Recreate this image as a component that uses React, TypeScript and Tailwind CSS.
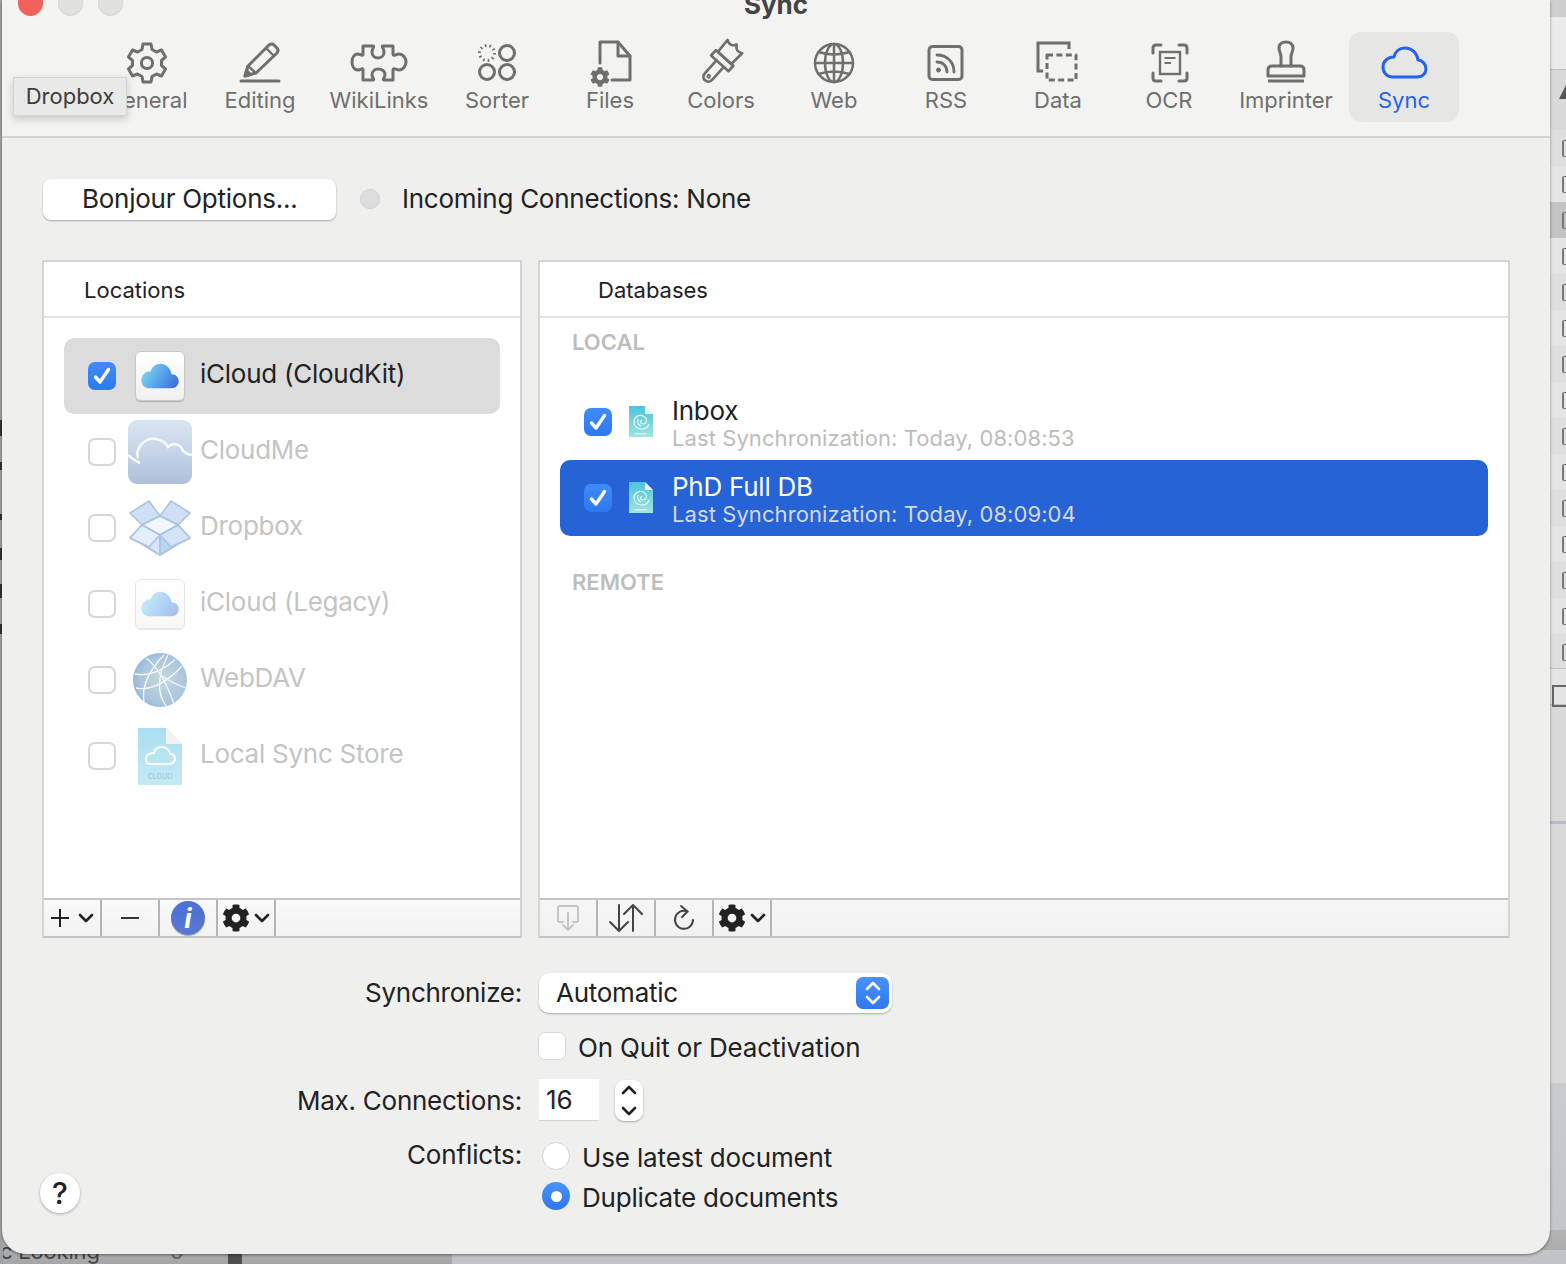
import { FaCog } from "react-icons/fa";
import type { ReactNode } from "react";

const Check = ({ disabled }: { disabled?: boolean }) => (
  <span className={`flex h-[28px] w-[28px] shrink-0 items-center justify-center rounded-[7px] bg-gradient-to-b from-[#3f8cf8] to-[#2f78f0] ${disabled ? "opacity-50" : ""}`}>
    <svg width="20" height="20" viewBox="0 0 20 20" fill="none" stroke="#fff" strokeWidth="3.4" strokeLinecap="round" strokeLinejoin="round">
      <path d="M3.5 11 L8 16 L16.5 3.5" />
    </svg>
  </span>
);

const Unchecked = () => (
  <span className="block h-[28px] w-[28px] shrink-0 rounded-[7px] border-2 border-[#d6d6d6] bg-white" />
);

const ToolIcon = ({ children, blue }: { children: ReactNode; blue?: boolean }) => (
  <svg width="60" height="60" viewBox="0 0 60 60" fill="none" stroke={blue ? "#2563eb" : "#6f6f6d"} strokeWidth="3" strokeLinejoin="round" strokeLinecap="round">
    {children}
  </svg>
);

const tools = [
  {
    label: "General",
    pos: "left-[92px]",
    icon: (
      <>
        <path d="M26 12 H34 L35 17.5 L39.5 20 L44.5 18 L48.5 25 L44.5 28.5 V33.5 L48.5 37 L44.5 44 L39.5 42 L35 44.5 L34 50 H26 L25 44.5 L20.5 42 L15.5 44 L11.5 37 L15.5 33.5 V28.5 L11.5 25 L15.5 18 L20.5 20 L25 17.5 Z" />
        <circle cx="30" cy="31" r="5.6" />
      </>
    ),
  },
  {
    label: "Editing",
    pos: "left-[205px]",
    icon: (
      <>
        <path d="M11 49 H49" />
        <path d="M15 44 L18 34 L39 13 Q42 11 44 13 L47 16 Q49 18 47 21 L26 41 Z" />
        <path d="M36 16 L44 24 M18 34 L26 41" strokeWidth="2.4" />
        <path d="M15 44 L16.5 38.5 L20.5 42.5 Z" fill="#6f6f6d" />
      </>
    ),
  },
  {
    label: "WikiLinks",
    pos: "left-[324px]",
    icon: (
      <path d="M14 14 H24 C26 14 23 17 23 20 C23 24 26 26 29 26 C33 26 35 23 35 20 C35 17 32 14 34 14 H44 V22 C44 25 47 22 50 22 C54 22 57 26 57 30 C57 34 54 38 50 38 C47 38 44 35 44 38 V48 H35 C33 48 36 45 36 43 C36 39 33 37 29 37 C26 37 23 39 23 43 C23 45 26 48 24 48 H14 V38 C14 35 11 38 9 38 C5 38 3 34 3 30 C3 26 5 22 9 22 C11 22 14 25 14 22 Z" />
    ),
  },
  {
    label: "Sorter",
    pos: "left-[442px]",
    icon: (
      <>
        <circle cx="20" cy="21" r="7.5" strokeDasharray="1.6 3.1" strokeLinecap="butt" />
        <circle cx="40" cy="21" r="7.5" />
        <circle cx="20" cy="40" r="7.5" />
        <circle cx="40" cy="40" r="7.5" />
      </>
    ),
  },
  {
    label: "Files",
    pos: "left-[555px]",
    icon: (
      <>
        <path d="M20 31 V10 H38 L50 24 V48 H32" />
        <path d="M38 10 V24 H50" />
        <FaCog x={10} y={35} size={20} fill="#6f6f6d" stroke="none" />
      </>
    ),
  },
  {
    label: "Colors",
    pos: "left-[666px]",
    icon: (
      <g transform="translate(30 30) rotate(42) scale(0.9) translate(-30 -29)">
        <path d="M20 23 L19 6 C24 9 27 8 30 3 C33 8 36 9 41 6 L40 23 Z" strokeWidth="3" />
        <path d="M17 23 H43 V31 H17 Z" strokeWidth="3" />
        <path d="M25 31 V50 C25 58 36 58 36 50 V31" strokeWidth="3" />
        <circle cx="30.5" cy="50" r="1.6" strokeWidth="2" />
      </g>
    ),
  },
  {
    label: "Web",
    pos: "left-[779px]",
    icon: (
      <g strokeWidth="2.5">
        <circle cx="30" cy="31" r="19" />
        <ellipse cx="30" cy="31" rx="9" ry="19" />
        <path d="M30 12 V50 M11 31 H49 M14.5 20 Q30 25 45.5 20 M14.5 42 Q30 37 45.5 42" />
      </g>
    ),
  },
  {
    label: "RSS",
    pos: "left-[891px]",
    icon: (
      <>
        <rect x="13" y="14.5" width="33" height="33" rx="3.5" />
        <circle cx="22.5" cy="38" r="2" fill="#6f6f6d" strokeWidth="1" />
        <path d="M21 30 C27 30 31 34 31 40 M21 23 C31 23 38 30 38 40" strokeWidth="2.8" />
      </>
    ),
  },
  {
    label: "Data",
    pos: "left-[1003px]",
    icon: (
      <>
        <path d="M15 39 H10 V11 H41 V17" strokeLinecap="butt" strokeLinejoin="miter" />
        <rect x="19" y="23" width="29" height="25" strokeDasharray="6 3.4" strokeLinecap="butt" />
      </>
    ),
  },
  {
    label: "OCR",
    pos: "left-[1114px]",
    icon: (
      <>
        <path d="M14 21 V16 Q14 13 17 13 H22 M40 13 H45 Q48 13 48 16 V21 M48 41 V46 Q48 49 45 49 H40 M22 49 H17 Q14 49 14 46 V41" />
        <rect x="21" y="20" width="20" height="22" strokeWidth="2.4" strokeLinejoin="miter" />
        <path d="M25.5 26 H36.5 M25.5 31 H32" strokeWidth="2" strokeLinecap="butt" />
      </>
    ),
  },
  {
    label: "Imprinter",
    pos: "left-[1231px]",
    icon: (
      <>
        <path d="M25 34 V25 C25 21 23 20 23 16 C23 12 26 10 30 10 C34 10 37 12 37 16 C37 20 35 21 35 25 V34" />
        <path d="M16 34 H44 Q48 34 48 38 V44 H12 V38 Q12 34 16 34 Z" />
        <path d="M12 49 H48" strokeLinecap="butt" />
      </>
    ),
  },
  {
    label: "Sync",
    pos: "left-[1349px]",
    active: true,
    icon: <path d="M19 45 H43 C49 45 52 41 52 37 C52 32 48 28 44 28 C43 21 38 16 31 16 C25 16 21 20 20 25 C14 25 9 29 9 35 C9 41 13 45 19 45 Z" />,
  },
];

const IcloudIcon = ({ faded }: { faded?: boolean }) => (
  <span className={`flex h-[50px] w-[50px] items-center justify-center rounded-[6px] border border-[#c9c9c9] bg-gradient-to-b from-white to-[#f0f0f0] shadow-[0_1px_1px_rgba(0,0,0,0.2)] ${faded ? "opacity-45" : ""}`}>
    <svg width="40" height="28" viewBox="0 0 42 30">
      <defs>
        <linearGradient id={faded ? "icl2" : "icl1"} x1="0" x2="1" y1="0.3" y2="0.7">
          <stop offset="0" stopColor="#86d6ee" />
          <stop offset="0.5" stopColor="#58a6ea" />
          <stop offset="1" stopColor="#3f73dc" />
        </linearGradient>
      </defs>
      <path d="M9 28 H33 C38 28 41 25 41 20.5 C41 16 38 13 33.5 13 C32 6 27 2 21.5 2 C16 2 12.5 5.5 11 10 C5 10 1 14.5 1 19.5 C1 24.5 4.5 28 9 28 Z" fill={faded ? "url(#icl2)" : "url(#icl1)"} />
    </svg>
  </span>
);

const CloudMeIcon = () => (
  <svg width="64" height="64" viewBox="0 0 64 64">
    <defs>
      <linearGradient id="cm" x1="0" x2="0" y1="0" y2="1">
        <stop offset="0" stopColor="#d9e5f3" />
        <stop offset="0.5" stopColor="#c6d4e8" />
        <stop offset="1" stopColor="#aebfda" />
      </linearGradient>
    </defs>
    <rect width="64" height="64" rx="9" fill="url(#cm)" />
    <path d="M10 38 C7 28 17 17 28 19 C34 20 38 23 40 27 C45 22 53 24 55 31 Q58 34 64 35 M12 43 Q5 40 0 35" fill="none" stroke="#f4f7fb" strokeWidth="2.6" />
  </svg>
);

const DropboxIcon = () => (
  <svg width="62" height="56" viewBox="0 0 62 56">
    <g stroke="#a9c3e3" strokeWidth="1.6" strokeLinejoin="round">
      <path d="M31 16 L42 1 L61 13 L49 25 Z" fill="#cfe0f5" />
      <path d="M31 16 L20 1 L1 13 L13 25 Z" fill="#cfe0f5" />
      <path d="M13 25 L1 38 L13 44 L31 55 L49 44 L61 38 L49 25 L31 16 Z" fill="#c9dcf4" />
      <path d="M13 25 L31 16 L49 25 L31 35 Z" fill="#f2f7fd" />
      <path d="M13 25 L31 35 V55 L13 44 Z" fill="#d6e5f7" />
      <path d="M49 25 L31 35 V55 L49 44 Z" fill="#bdd5f0" />
      <path d="M1 38 L13 25 L31 35 L20 47 Z" fill="#e4eefa" />
      <path d="M61 38 L49 25 L31 35 L42 47 Z" fill="#d4e4f6" />
    </g>
  </svg>
);

const WebdavIcon = () => (
  <svg width="56" height="56" viewBox="0 0 56 56">
    <defs>
      <radialGradient id="wd" cx="0.55" cy="0.5" r="0.6">
        <stop offset="0" stopColor="#c7d8d8" />
        <stop offset="0.7" stopColor="#aac5de" />
        <stop offset="1" stopColor="#8fb2db" />
      </radialGradient>
    </defs>
    <circle cx="28" cy="28" r="27" fill="url(#wd)" />
    <g fill="none" stroke="#f3f9fd" strokeWidth="1.3">
      <path d="M3 22 Q22 26 43 8" />
      <path d="M12 50 Q8 28 32 3" />
      <path d="M36 3 Q20 34 34 54" />
      <path d="M30 24 Q42 32 54 36" />
      <path d="M14 6 Q30 18 42 52" />
      <path d="M4 36 Q26 40 50 14" />
    </g>
  </svg>
);

const SyncStoreIcon = () => (
  <svg width="48" height="60" viewBox="0 0 48 60" className="mt-[3px]">
    <defs>
      <linearGradient id="ss" x1="0" x2="0" y1="0" y2="1">
        <stop offset="0" stopColor="#aadff0" />
        <stop offset="1" stopColor="#c5eaf5" />
      </linearGradient>
    </defs>
    <path d="M2 0 H30 L46 16 V56 Q46 57 45 57 H3 Q2 57 2 56 Z" fill="url(#ss)" />
    <path d="M30 0 L46 16 H30 Z" fill="#f2f2f2" />
    <path d="M14 36 H33 C37 36 39 33 39 31 C39 28 37 26 34 26 C33 22 30 19 26 19 C22 19 19 21 18 25 C13 25 10 27 10 31 C10 34 11 36 14 36 Z" fill="none" stroke="#fff" strokeWidth="1.8" />
    <text x="24" y="51" fontSize="7" textAnchor="middle" fill="#8fc6d8" stroke="none">CLOUD</text>
  </svg>
);

const DbIcon = ({ id }: { id: string }) => (
  <svg width="26" height="32" viewBox="0 0 26 32" className="shrink-0">
    <defs>
      <linearGradient id={id} x1="0" x2="0" y1="0" y2="1">
        <stop offset="0" stopColor="#4cc3de" />
        <stop offset="1" stopColor="#9fe4df" />
      </linearGradient>
    </defs>
    <path d="M1 0 H17 L25 8 V31 H1 Z" fill={`url(#${id})`} />
    <path d="M17 0 L25 8 H17 Z" fill="#f1f1f1" />
    <path d="M6 16 C6 11 11 8 15 10 C20 12 19 18 15 18 C12 18 12 15 14 14 M6 16 C6 21 10 23 14 23 C17 23 20 21 21 18 M10 13 C9 16 10 19 13 20" fill="none" stroke="#eafafa" strokeWidth="1.2" />
    <rect x="7" y="27" width="12" height="1.4" fill="#d6f4f4" />
  </svg>
);

const locations = [
  { name: "iCloud (CloudKit)", checked: true, icon: <IcloudIcon /> },
  { name: "CloudMe", icon: <CloudMeIcon /> },
  { name: "Dropbox", icon: <DropboxIcon /> },
  { name: "iCloud (Legacy)", icon: <IcloudIcon faded /> },
  { name: "WebDAV", icon: <WebdavIcon /> },
  { name: "Local Sync Store", icon: <SyncStoreIcon /> },
];

// dark scraps of the window behind, sticking out on the left
const leftTicks = ["top-[420px] h-[16px]", "top-[462px] h-[8px]", "top-[514px] h-[6px]", "top-[548px] h-[12px]", "top-[584px] h-[14px]", "top-[624px] h-[10px]"];

const Chevron = ({ color = "#222" }: { color?: string }) => (
  <svg width="16" height="10" viewBox="0 0 16 10" fill="none" stroke={color} strokeWidth="2.6" strokeLinecap="round" strokeLinejoin="round">
    <path d="M2 2 L8 8 L14 2" />
  </svg>
);

const GearMenu = () => (
  <>
    <FaCog size={28} color="#222" />
    <span className="ml-[4px]"><Chevron /></span>
  </>
);

const FootBtn = ({ children }: { children: ReactNode }) => (
  <div className="flex h-full w-[58px] items-center justify-center border-r-2 border-[#b4b4b4]">{children}</div>
);

const App = () => {
  return (
    <div className="relative h-[1264px] w-[1566px] overflow-hidden bg-[#d9d9d9] [font-family:Inter,sans-serif] text-[#222]">
      {/* stuff behind the window */}
      <div className="absolute left-[1550px] top-0 h-[17px] w-[16px] bg-[#cfcfcf]" />
      <div className="absolute left-[1550px] top-[17px] h-[53px] w-[16px] border-b border-[#bcbcbc] bg-[#ebebeb]" />
      <div className="absolute left-[1559px] top-[85px] h-0 w-0 border-x-[7px] border-b-[14px] border-x-transparent border-b-[#555]" />
      <div className="absolute left-[1550px] top-[130px] flex w-[16px] flex-col">
        {Array.from({ length: 15 }).map((_, i) => (
          <div key={i} className={`flex h-[36px] items-center pl-[12px] ${i === 2 ? "bg-[#c4c4c4]" : i % 2 === 0 ? "bg-[#dedede]" : "bg-[#e5e5e5]"}`}>
            <span className="block h-[17px] w-[5px] rounded-l-[2px] border-y border-l-2 border-[#777]" />
          </div>
        ))}
      </div>
      <div className="absolute left-[1550px] top-[668px] h-[37px] w-[16px] border-y border-[#c4c4c4] bg-[#e5e5e5]">
        <span className="absolute left-[2px] top-[16px] block h-[22px] w-[14px] border-2 border-r-0 border-[#666]" />
      </div>
      <div className="absolute left-[1550px] top-[821px] h-[3px] w-[16px] bg-[#b6bdc9]" />
      <div className="absolute left-[1550px] top-[1083px] h-[181px] w-[16px] bg-gradient-to-b from-[#c9cbd0] to-[#c2c4ca]" />
      <div className="absolute left-0 top-[1230px] h-[34px] w-[1566px] bg-gradient-to-b from-[#b4b4b4] to-[#a5a6a8]" />
      <div className="absolute left-[452px] top-[1250px] h-[14px] w-[1114px] bg-[#c2c3c8]" />
      <div className="absolute left-[228px] top-[1250px] h-[14px] w-[14px] bg-[#4f4f4f]" />
      <div className="absolute left-0 top-[1236px] text-[22px] leading-[30px] tracking-[-0.2px] text-[#444]">c Looking</div>
      <div className="absolute left-[170px] top-[1236px] text-[22px] leading-[30px] text-[#666]">5</div>
      <div className="absolute left-0 top-0 h-[1264px] w-[3px] bg-[#a2a2a2]" />
      {leftTicks.map((t) => (
        <div key={t} className={`absolute left-0 w-[2px] bg-[#333] ${t}`} />
      ))}

      {/* window */}
      <div className="absolute left-[2px] top-0 h-[1254px] w-[1548px] rounded-b-[24px] bg-[#efefee] shadow-[0_1px_3px_rgba(0,0,0,0.45)]" />
      <div className="absolute left-[2px] top-0 h-[138px] w-[1548px] border-b-2 border-[#d4d4d3] bg-[#f3f3f1]" />

      <span className="absolute left-[18px] top-[-10px] h-[26px] w-[25px] rounded-full bg-[#f0625a]" />
      <span className="absolute left-[58px] top-[-10px] h-[26px] w-[25px] rounded-full border border-[#d2d2d0] bg-[#e0e0de]" />
      <span className="absolute left-[98px] top-[-10px] h-[26px] w-[25px] rounded-full border border-[#d2d2d0] bg-[#e0e0de]" />
      <div className="absolute left-[576px] top-[-10px] w-[400px] text-center text-[26px] font-bold leading-[30px] text-[#444]">Sync</div>

      {tools.map((t) => (
        <div key={t.label} className={`absolute top-[32px] flex h-[90px] w-[110px] flex-col items-center rounded-[12px] ${t.pos} ${t.active ? "bg-[#e6e6e4]" : ""}`}>
          <ToolIcon blue={t.active}>{t.icon}</ToolIcon>
          <span className={`mt-[-6px] whitespace-nowrap text-[22px] leading-[28px] ${t.active ? "text-[#2563eb]" : "text-[#6f6f6d]"}`}>{t.label}</span>
        </div>
      ))}

      {/* tooltip */}
      <div className="absolute left-[13px] top-[77px] flex h-[39px] w-[114px] items-center justify-center border border-[#d4d4d2] bg-[#e9e9e7] text-[22px] text-[#3c3c3c] shadow-[0_3px_8px_rgba(0,0,0,0.18)]">Dropbox</div>

      {/* bonjour row */}
      <div className="absolute left-[43px] top-[179px] flex h-[41px] w-[293px] items-center rounded-[8px] bg-white pb-[2px] pl-[39px] text-[26px] tracking-[-0.26px] shadow-[0_1px_2px_rgba(0,0,0,0.3)]">Bonjour Options...</div>
      <span className="absolute left-[360px] top-[189px] h-[20px] w-[20px] rounded-full border border-[#cfcfcf] bg-[#dddddd]" />
      <div className="absolute left-[402px] top-[183px] text-[26px] leading-[32px] tracking-[-0.26px]">Incoming Connections: None</div>

      {/* locations */}
      <div className="absolute left-[42px] top-[260px] flex h-[678px] w-[480px] flex-col border-2 border-[#d4d4d3] border-b-[#c4c4c4] bg-white">
        <div className="flex h-[56px] shrink-0 items-center border-b-2 border-[#e2e2e2] pl-[40px] pt-[2px] text-[22px]">Locations</div>
        <div className="flex-1 px-[20px] pt-[20px]">
          {locations.map((l) => (
            <div key={l.name} className={`flex h-[76px] items-center rounded-[10px] ${l.checked ? "bg-[#dcdcdc]" : ""}`}>
              <div className="flex w-[76px] justify-center">
                {l.checked ? <Check /> : <Unchecked />}
              </div>
              <div className="flex w-[40px] justify-center">
                <div className="flex h-[60px] w-[70px] shrink-0 items-center justify-center">{l.icon}</div>
              </div>
              <span className={`mb-[6px] ml-[20px] text-[26px] tracking-[-0.26px] ${l.checked ? "text-[#222]" : "text-[#c4c4c4]"}`}>{l.name}</span>
            </div>
          ))}
        </div>
        <div className="flex h-[38px] shrink-0 border-t-2 border-[#c4c4c4] bg-gradient-to-b from-[#fafafa] to-[#f2f2f2]">
          <FootBtn>
            <svg width="20" height="20" viewBox="0 0 20 20" stroke="#222" strokeWidth="2"><path d="M10 1 V19 M1 10 H19" /></svg>
            <span className="ml-[8px]"><Chevron /></span>
          </FootBtn>
          <FootBtn>
            <span className="block h-[2px] w-[18px] bg-[#333]" />
          </FootBtn>
          <FootBtn>
            <span className="flex h-[34px] w-[34px] items-center justify-center rounded-full bg-gradient-to-b from-[#4a6fd6] to-[#5a78cf] [font-family:'Liberation_Serif',serif] text-[27px] font-bold italic leading-none text-white shadow-[0_1px_1px_rgba(0,0,0,0.3)]">i</span>
          </FootBtn>
          <FootBtn><GearMenu /></FootBtn>
        </div>
      </div>

      {/* databases */}
      <div className="absolute left-[538px] top-[260px] flex h-[678px] w-[972px] flex-col border-2 border-[#d4d4d3] border-b-[#c4c4c4] bg-white">
        <div className="flex h-[56px] shrink-0 items-center border-b-2 border-[#e2e2e2] pl-[58px] pt-[2px] text-[22px]">Databases</div>
        <div className="flex-1 px-[20px]">
          <div className="ml-[12px] mt-[9px] text-[22px] font-semibold leading-[30px] text-[#bdbdbd]">LOCAL</div>
          <div className="mt-[27px] flex h-[76px] items-center pl-[24px]">
            <Check />
            <div className="ml-[16px] mr-[18px]"><DbIcon id="db1" /></div>
            <div className="pt-[2px]">
              <div className="text-[26px] leading-[30px] tracking-[-0.26px] text-[#222]">Inbox</div>
              <div className="text-[22px] leading-[24px] tracking-[0.08px] text-[#bcbcbc]">Last Synchronization: Today, 08:08:53</div>
            </div>
          </div>
          <div className="flex h-[76px] items-center rounded-[10px] bg-[#2563d6] pl-[24px]">
            <Check />
            <div className="ml-[16px] mr-[18px]"><DbIcon id="db2" /></div>
            <div className="pt-[2px]">
              <div className="text-[26px] leading-[30px] tracking-[-0.26px] text-white">PhD Full DB</div>
              <div className="text-[22px] leading-[24px] tracking-[0.08px] text-[#d6d9df]">Last Synchronization: Today, 08:09:04</div>
            </div>
          </div>
          <div className="ml-[12px] mt-[31px] text-[22px] font-semibold leading-[30px] text-[#bdbdbd]">REMOTE</div>
        </div>
        <div className="flex h-[38px] shrink-0 border-t-2 border-[#c4c4c4] bg-gradient-to-b from-[#f6f6f6] to-[#f1f1f1]">
          <FootBtn>
            <svg width="26" height="28" viewBox="0 0 26 28" fill="none" stroke="#c4c4c4" strokeWidth="2" strokeLinecap="round" strokeLinejoin="round">
              <path d="M8 18 H5 Q3 18 3 16 V4 Q3 2 5 2 H21 Q23 2 23 4 V16 Q23 18 21 18 H18" />
              <path d="M13 9 V26 M8 21 L13 26 L18 21" />
            </svg>
          </FootBtn>
          <FootBtn>
            <svg width="36" height="30" viewBox="0 0 36 30" fill="none" stroke="#444" strokeWidth="2" strokeLinecap="round" strokeLinejoin="round">
              <path d="M11 2 V28 M2 19 L11 28 M11 28 L20 19" />
              <path d="M25 28 V2 M16 11 L25 2 L34 11" />
            </svg>
          </FootBtn>
          <FootBtn>
            <svg width="24" height="28" viewBox="0 0 24 28" fill="none" stroke="#444" strokeWidth="2" strokeLinecap="round" strokeLinejoin="round">
              <path d="M15.5 7.5 A9 9 0 1 0 21 16" />
              <path d="M9 2 L15.5 7.5 L10 13" />
            </svg>
          </FootBtn>
          <FootBtn><GearMenu /></FootBtn>
        </div>
      </div>

      {/* sync options */}
      <div className="absolute left-[120px] top-[977px] w-[402px] text-right text-[26px] leading-[32px] tracking-[-0.26px]">Synchronize:</div>
      <div className="absolute left-[539px] top-[973px] flex h-[40px] w-[353px] items-center justify-between rounded-[10px] bg-white pl-[17px] pr-[3px] text-[26px] tracking-[-0.26px] shadow-[0_1px_2px_rgba(0,0,0,0.3)]">
        <span className="mb-[2px]">Automatic</span>
        <span className="flex h-[32px] w-[33px] items-center justify-center rounded-[7px] bg-gradient-to-b from-[#4a92f8] to-[#2f78ef]">
          <svg width="18" height="26" viewBox="0 0 18 26" fill="none" stroke="#fff" strokeWidth="2.6" strokeLinecap="round" strokeLinejoin="round">
            <path d="M3 9 L9 3 L15 9 M3 17 L9 23 L15 17" />
          </svg>
        </span>
      </div>

      <span className="absolute left-[538px] top-[1032px] block h-[28px] w-[28px] rounded-[7px] border border-[#d6d6d6] bg-white" />
      <div className="absolute left-[578px] top-[1032px] text-[26px] leading-[32px] tracking-[-0.15px]">On Quit or Deactivation</div>

      <div className="absolute left-[120px] top-[1085px] w-[402px] text-right text-[26px] leading-[32px] tracking-[-0.26px]">Max. Connections:</div>
      <div className="absolute left-[539px] top-[1079px] flex h-[42px] w-[60px] items-center border-b border-[#d4d4d4] bg-white pl-[7px] text-[26px]">16</div>
      <div className="absolute left-[615px] top-[1080px] flex h-[41px] w-[28px] flex-col items-center justify-around rounded-[9px] bg-white shadow-[0_1px_2px_rgba(0,0,0,0.3)]">
        <svg width="16" height="10" viewBox="0 0 16 10" fill="none" stroke="#222" strokeWidth="2.6" strokeLinecap="round" strokeLinejoin="round"><path d="M2 8 L8 2 L14 8" /></svg>
        <Chevron />
      </div>

      <div className="absolute left-[120px] top-[1139px] w-[402px] text-right text-[26px] leading-[32px] tracking-[-0.15px]">Conflicts:</div>
      <span className="absolute left-[542px] top-[1142px] block h-[28px] w-[28px] rounded-full border border-[#d6d6d6] bg-white" />
      <div className="absolute left-[582px] top-[1142px] text-[26px] leading-[32px] tracking-[-0.15px]">Use latest document</div>
      <span className="absolute left-[542px] top-[1182px] flex h-[28px] w-[28px] items-center justify-center rounded-full bg-gradient-to-b from-[#4a92f8] to-[#2f78ef]">
        <span className="block h-[11px] w-[11px] rounded-full bg-white" />
      </span>
      <div className="absolute left-[582px] top-[1182px] text-[26px] leading-[32px] tracking-[-0.2px]">Duplicate documents</div>

      <div className="absolute left-[40px] top-[1173px] flex h-[40px] w-[40px] items-center justify-center rounded-full bg-white text-[30px] font-medium shadow-[0_1px_3px_rgba(0,0,0,0.3)]">?</div>
    </div>
  );
};

export default App;
